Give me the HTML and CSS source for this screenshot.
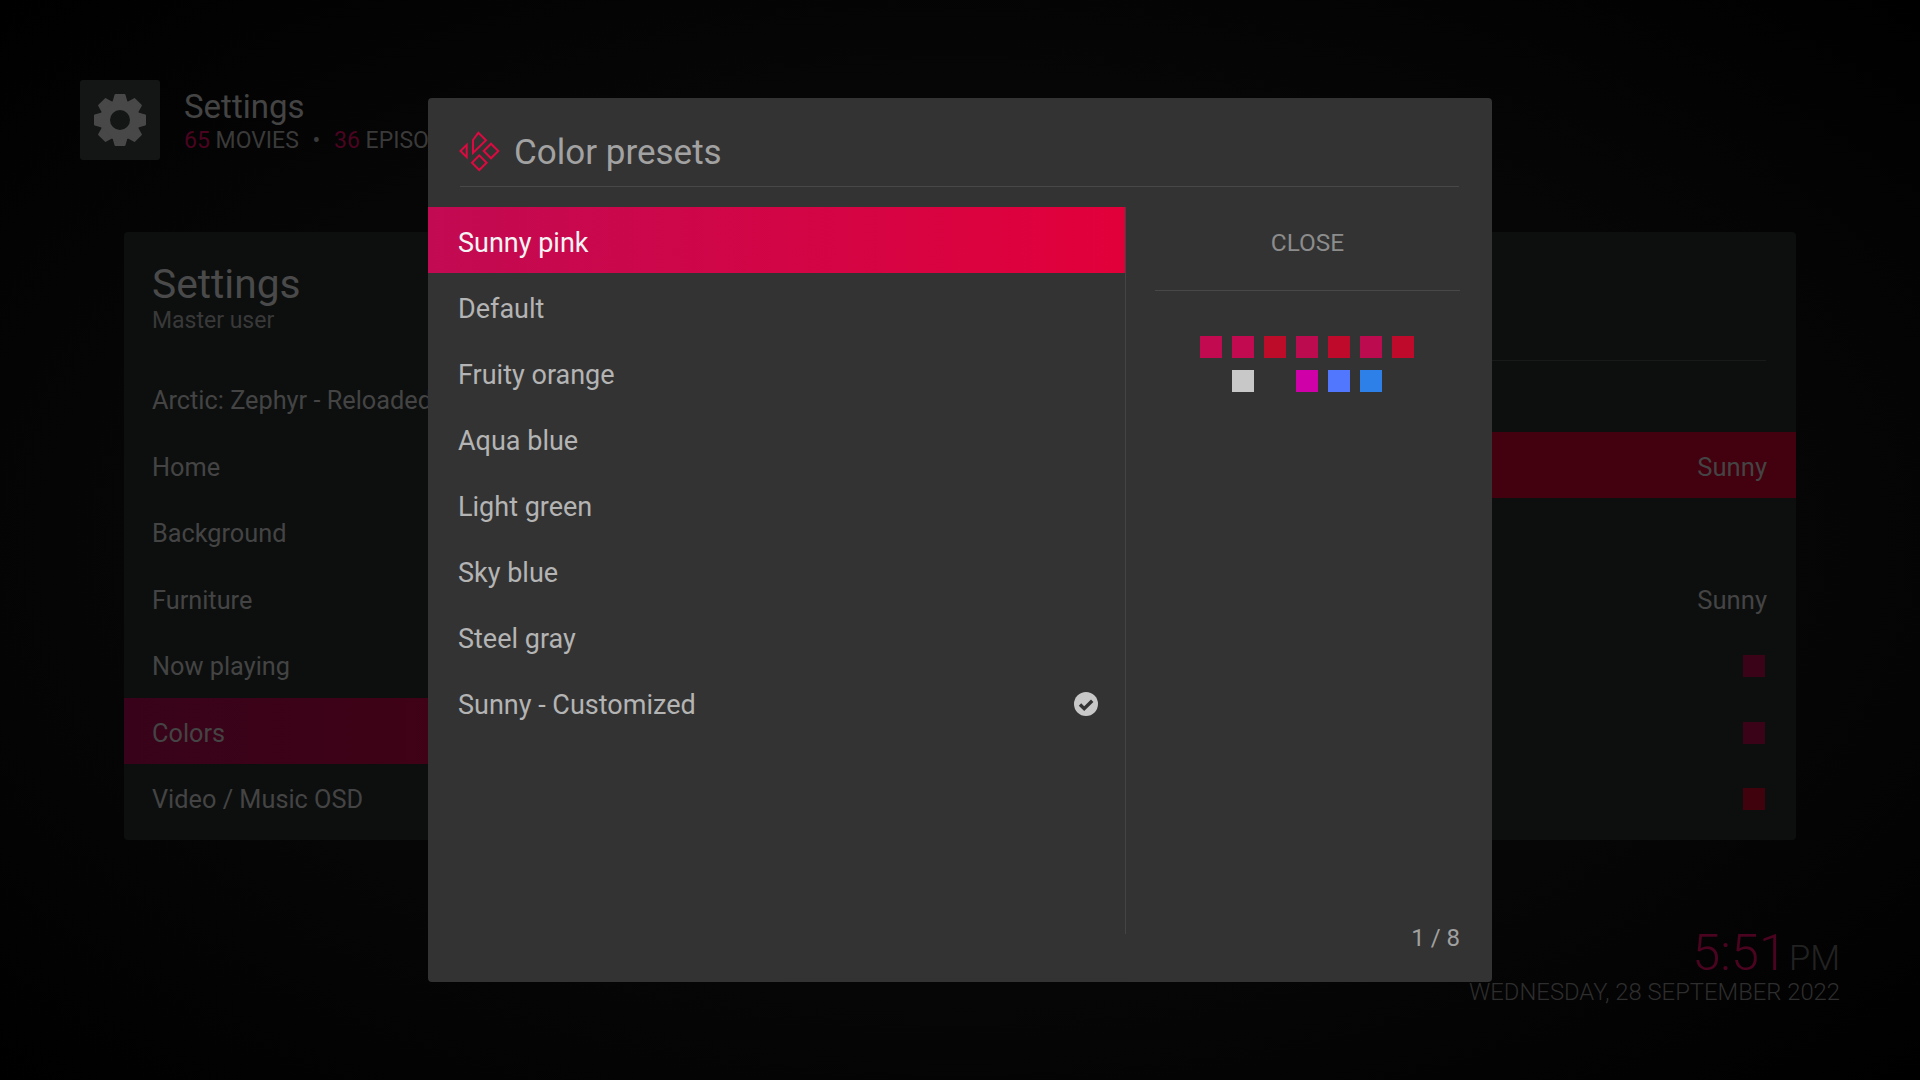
FILE: index.html
```html
<!DOCTYPE html>
<html lang="en">
<head>
<meta charset="utf-8">
<title>Color presets</title>
<link rel="stylesheet" href="styles.css">
</head>
<body>
<div class="page">
  <header class="topbar">
    <div class="tile">
      <svg class="gear" viewBox="-30 -30 60 60">
        <defs><path id="tooth" d="M-6.500 -18 L-4.500 -25 H4.500 L6.500 -18Z" fill="#484848" stroke="#484848" stroke-width="2" stroke-linejoin="round"/></defs>
        <circle r="15" fill="none" stroke="#484848" stroke-width="10"/>
        <use href="#tooth"/><use href="#tooth" transform="rotate(45)"/><use href="#tooth" transform="rotate(90)"/><use href="#tooth" transform="rotate(135)"/><use href="#tooth" transform="rotate(180)"/><use href="#tooth" transform="rotate(225)"/><use href="#tooth" transform="rotate(270)"/><use href="#tooth" transform="rotate(315)"/>
      </svg>
    </div>
    <div class="topbar-text">
      <div class="topbar-title">Settings</div>
      <div class="topbar-stats"><span class="num">65</span> MOVIES <span class="dot">•</span> <span class="num">36</span> EPISODES</div>
    </div>
  </header>

  <main class="panel">
    <section class="side">
      <div class="panel-title">Settings</div>
      <div class="panel-sub">Master user</div>
      <div class="rows">
        <div class="row">Arctic: Zephyr - Reloaded</div>
        <div class="row">Home</div>
        <div class="row">Background</div>
        <div class="row">Furniture</div>
        <div class="row">Now playing</div>
        <div class="row row-on">Colors</div>
        <div class="row">Video / Music OSD</div>
      </div>
    </section>
    <section class="values">
      <div class="vrow vrow-top"></div>
      <div class="vrow vrow-on">Sunny</div>
      <div class="vrow"></div>
      <div class="vrow">Sunny</div>
      <div class="vrow"><span class="chip chip-a"></span></div>
      <div class="vrow"><span class="chip chip-a"></span></div>
      <div class="vrow"><span class="chip chip-b"></span></div>
    </section>
  </main>

  <footer class="clock">
    <div class="time"><span class="hm">5:51</span><span class="ampm">PM</span></div>
    <div class="date">WEDNESDAY, 28 SEPTEMBER 2022</div>
  </footer>

  <div class="dialog">
    <div class="dialog-head">
      <svg class="logo" viewBox="0 0 50 50" fill="none" stroke="#dc0a40" stroke-width="2" stroke-linejoin="miter">
        <path d="M5.500 25 11.700 18.800V31.200Z"/>
        <path d="M23.300 6.800 31 14.300 18 27V14Z"/>
        <path d="M28.700 25 36 17.700 43.300 25 36 32.300Z"/>
        <path d="M17 36.700 24.300 29.400 31.600 36.700 24.300 44Z"/>
      </svg>
      <h1 class="dialog-title">Color presets</h1>
    </div>
    <div class="dialog-body">
      <ul class="list">
        <li class="item item-on">Sunny pink</li>
        <li class="item">Default</li>
        <li class="item">Fruity orange</li>
        <li class="item">Aqua blue</li>
        <li class="item">Light green</li>
        <li class="item">Sky blue</li>
        <li class="item">Steel gray</li>
        <li class="item">Sunny - Customized
          <svg class="check" viewBox="0 0 24 24"><circle cx="12" cy="12" r="12" fill="#c8c8c8"/><path d="M6 12.500l4.200 4.200L18.200 8.700" fill="none" stroke="#333" stroke-width="3.400"/></svg>
        </li>
      </ul>
      <aside class="rail">
        <div class="close">CLOSE</div>
        <div class="swatches">
          <span class="sw s1"></span><span class="sw s1"></span><span class="sw s2"></span><span class="sw s3"></span><span class="sw s4"></span><span class="sw s3"></span><span class="sw s4"></span>
          <span class="sw s0"></span><span class="sw s5"></span><span class="sw s0"></span><span class="sw s6"></span><span class="sw s7"></span><span class="sw s8"></span><span class="sw s0"></span>
        </div>
        <div class="count">1 / 8</div>
      </aside>
    </div>
  </div>
</div>
</body>
</html>
```
FILE: styles.css
```css
* { box-sizing: border-box; }
html, body { margin: 0; height: 100%; }
body { background: #000; font-family: "Roboto", "Liberation Sans", sans-serif; overflow: hidden; }
.page {
  position: relative; width: 1920px; height: 1080px; padding: 80px 124px 0 80px;
  background: radial-gradient(ellipse at center, #080808 0%, #060606 60%, #000 100%);
}
.topbar { display: flex; gap: 24px; height: 80px; }
.tile { width: 80px; height: 80px; background: #141515; border-radius: 3px; display: flex; align-items: center; justify-content: center; }
.gear { width: 60px; height: 60px; }
.topbar-text { padding-top: 7px; }
.topbar-title { font-size: 33px; line-height: 40px; color: #444; }
.topbar-stats { font-size: 23px; line-height: 28px; color: #3a3a3a; white-space: nowrap; }
.num { color: #4a0420; }
.dot { margin: 0 8px; }

.panel { display: grid; grid-template-columns: 660px 1fr; margin: 72px 0 0 44px; height: 608px; background: #0d0f0f; border-radius: 4px; overflow: hidden; }
.panel-title { font-size: 40.700px; line-height: 46px; color: #4a4a4a; padding: 29px 0 0 28px; }
.panel-sub { font-size: 23px; line-height: 28px; color: #393939; padding-left: 28px; }
.rows { margin-top: 30px; display: flex; flex-direction: column; gap: .5px; }
.row { height: 66px; line-height: 71px; padding-left: 28px; font-size: 25.300px; color: #444; white-space: nowrap; }
.row-on { background: linear-gradient(90deg, #38031a, #470010); }

.values { padding-top: 128px; display: flex; flex-direction: column; gap: .5px; position: relative; }
.values::before { content: ""; position: absolute; top: 128px; left: 0; right: 30px; height: 1px; background: #181a1a; }
.vrow { height: 66px; padding: 3px 29px 0 0; display: flex; align-items: center; justify-content: flex-end; font-size: 25.600px; color: #444; }
.vrow-top { height: 71.500px; padding: 0; }
.vrow-on { background: #43000f; }
.chip { width: 22px; height: 22px; margin-right: 2px; }
.chip-a { background: #3a0318; }
.chip-b { background: #40020c; }

.clock { text-align: right; margin-top: 100px; margin-right: -44px; }
.hm { font-size: 50.500px; color: #4a0420; font-weight: 300; }
.ampm { font-size: 34.500px; color: #222; margin-left: 2px; font-weight: 300; }
.time { line-height: 26px; }
.date { font-size: 23.800px; line-height: 28px; color: #2e2e2e; font-weight: 300; }

.dialog { position: absolute; left: 428px; top: 98px; width: 1064px; height: 884px; background: #333; border-radius: 4px; }
.dialog-head { display: flex; align-items: center; gap: 9px; margin: 0 33px 0 32px; height: 89px; border-bottom: 1px solid #484848; padding-top: 20px; }
.logo { width: 50px; height: 50px; flex: none; margin: -2px 0 0 -5px; }
.dialog-title { font-size: 35px; font-weight: 400; margin: 0; color: #a2a2a2; }
.dialog-body { display: grid; grid-template-columns: 698px 1fr; height: 775px; margin-top: 20px; }
.list { list-style: none; margin: 0; padding: 0; border-right: 1px solid #444; height: 727px; }
.item { height: 66px; display: flex; align-items: center; justify-content: space-between; padding: 6px 27px 0 30px; font-size: 27px; color: #b4b4b4; }
.item-on { background: linear-gradient(90deg, #c20a52, #e2003a); color: #f4f4f4; }
.check { width: 24px; height: 24px; margin-top: -2px; }
.rail { position: relative; display: flex; flex-direction: column; padding: 0 32px 0 29px; }
.close { height: 84px; line-height: 72px; text-align: center; font-size: 24.400px; color: #8c8c8c; border-bottom: 1px solid #484848; }
.swatches { display: grid; grid-template-columns: repeat(7, 22px); gap: 12px 10px; margin: 45px 0 0 45px; }
.sw { height: 22px; }
.s0 { background: transparent; }
.s1 { background: #c10a50; }
.s2 { background: #bd0b2a; }
.s3 { background: #bd0b50; }
.s4 { background: #bf0a2c; }
.s5 { background: #c8c8c8; }
.s6 { background: #d000a8; }
.s7 { background: #5177ff; }
.s8 { background: #2d80e8; }
.count { position: absolute; right: 32px; top: 717px; font-size: 24px; color: #a0a0a0; }
```
